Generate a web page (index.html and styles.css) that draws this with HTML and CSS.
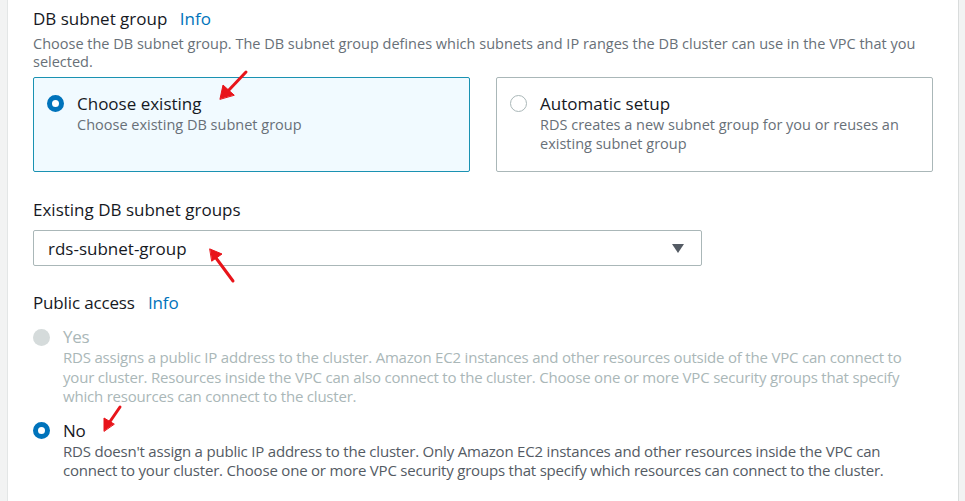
FILE: index.html
```html
<!DOCTYPE html>
<html>
<head>
<meta charset="utf-8">
<link rel="stylesheet" href="styles.css">
</head>
<body>
<div class="page">
  <div class="panel">
    <div class="field-title">DB subnet group <a class="info">Info</a></div>
    <div class="field-desc">Choose the DB subnet group. The DB subnet group defines which subnets and IP ranges the DB cluster can use in the VPC that you selected.</div>
    <div class="tiles">
      <div class="tile selected">
        <span class="radio on"></span>
        <div class="tile-body">
          <div class="tile-label">Choose existing</div>
          <div class="tile-desc">Choose existing DB subnet group</div>
        </div>
      </div>
      <div class="tile">
        <span class="radio off"></span>
        <div class="tile-body">
          <div class="tile-label">Automatic setup</div>
          <div class="tile-desc">RDS creates a new subnet group for you or reuses an existing subnet group</div>
        </div>
      </div>
    </div>

    <div class="field-title sub">Existing DB subnet groups</div>
    <div class="select">
      <span class="select-value">rds-subnet-group</span>
      <svg class="caret" width="12" height="9" viewBox="0 0 12 9"><path d="M0 0 H12 L6 9 Z" fill="#545b64"/></svg>
    </div>

    <div class="field-title pub">Public access <a class="info">Info</a></div>
    <div class="option disabled">
      <span class="radio dis"></span>
      <div class="option-body">
        <div class="option-label">Yes</div>
        <div class="option-desc">RDS assigns a public IP address to the cluster. Amazon EC2 instances and other resources outside of the VPC can connect to your cluster. Resources inside the VPC can also connect to the cluster. Choose one or more VPC security groups that specify which resources can connect to the cluster.</div>
      </div>
    </div>
    <div class="option no">
      <span class="radio on"></span>
      <div class="option-body">
        <div class="option-label">No</div>
        <div class="option-desc">RDS doesn't assign a public IP address to the cluster. Only Amazon EC2 instances and other resources inside the VPC can connect to your cluster. Choose one or more VPC security groups that specify which resources can connect to the cluster.</div>
      </div>
    </div>
  </div>
</div>
<svg class="arrows" width="965" height="501" viewBox="0 0 965 501">
  <g stroke="#e8141a" stroke-width="3" stroke-linecap="round" fill="#e8141a">
    <line x1="246" y1="72" x2="228" y2="91"/>
    <path d="M220 99 L223 85 L234 95 Z" stroke-width="1"/>
    <line x1="233" y1="281" x2="216" y2="258"/>
    <path d="M210 249 L222 254 L212 261 Z" stroke-width="1"/>
    <line x1="120" y1="407" x2="109" y2="423"/>
    <path d="M104 431 L104 418 L114 424 Z" stroke-width="1"/>
  </g>
</svg>
</body>
</html>
```

FILE: styles.css
```css
* { box-sizing: border-box; }
html, body {
  margin: 0;
  padding: 0;
  background: #f2f3f3;
  font-family: "Open Sans", "Noto Sans", sans-serif;
  color: #16191f;
}
.page {
  position: relative;
  width: 965px;
  height: 501px;
  padding: 0 6px 0 7px;
  overflow: hidden;
}
.panel {
  height: 501px;
  background: #ffffff;
  border-left: 1px solid #e3e6e6;
  border-right: 1px solid #d9dcdc;
  padding: 8px 25px 0 25px;
}
.field-title {
  font-size: 17px;
  line-height: 22px;
  color: #16191f;
}
.info {
  color: #0073bb;
  margin-left: 8px;
  text-decoration: none;
}
.field-desc {
  margin-top: 5px;
  font-size: 14.5px;
  line-height: 18px;
  color: #687078;
  width: 900px;
}
.tiles {
  margin-top: 6px;
  width: 900px;
  display: grid;
  grid-template-columns: 1fr 1fr;
  column-gap: 26px;
}
.tile {
  height: 95px;
  border: 1px solid #aab7b8;
  border-radius: 2px;
  padding: 15px 13px 0 13px;
  display: flex;
  gap: 13px;
  background: #fff;
}
.tile.selected {
  border-color: #1a92b2;
  background: #f1faff;
}
.radio {
  flex: none;
  width: 17px;
  height: 17px;
  border-radius: 50%;
  margin-top: 2px;
}
.radio.on {
  background: #fff;
  border: 5.5px solid #0073bb;
}
.radio.off {
  background: #fff;
  border: 1px solid #aab7b8;
}
.radio.dis {
  background: #d5dbdb;
}
.tile-label {
  font-size: 17px;
  line-height: 22px;
}
.tile-desc {
  font-size: 14.5px;
  line-height: 19px;
  color: #687078;
}
.field-title.sub {
  margin-top: 27px;
  font-size: 17px;
}
.select {
  margin-top: 9px;
  width: 669px;
  height: 36px;
  border: 1px solid #aab7b8;
  border-radius: 2px;
  display: flex;
  align-items: center;
  justify-content: space-between;
  padding: 0 17px 0 14px;
}
.select-value {
  font-size: 17px;
  color: #16191f;
}
.caret { display: block; margin-top: 1px; }
.field-title.pub {
  margin-top: 26px;
  font-size: 17px;
  letter-spacing: -0.15px;
}
.field-title.pub .info { margin-left: 9px; }
.option {
  display: flex;
  gap: 13px;
  margin-top: 12px;
}
.option.no { margin-top: 13px; }
.option .radio { margin-top: 2.5px; }
.option-label {
  font-size: 17px;
  line-height: 22px;
  letter-spacing: -0.3px;
}
.option-desc {
  font-size: 15px;
  line-height: 19.5px;
  letter-spacing: -0.2px;
  color: #545b64;
  width: 860px;
}
.option.disabled .option-label,
.option.disabled .option-desc {
  color: #aab7b8;
}
.arrows {
  position: absolute;
  left: 0;
  top: 0;
  pointer-events: none;
}
```
